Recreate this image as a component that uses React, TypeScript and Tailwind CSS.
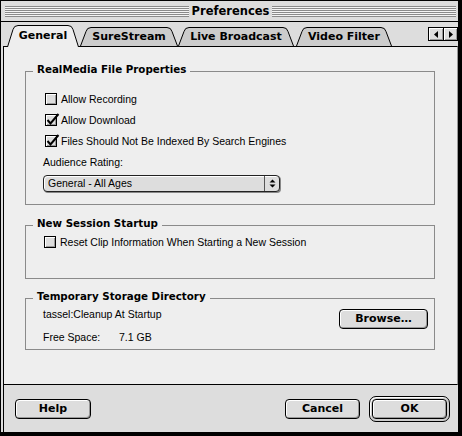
import React from "react";

const body = "font-['Liberation_Sans',Arial,sans-serif] text-[10.5px] leading-[12px] text-black";
const bold = "font-['DejaVu_Sans',Verdana,sans-serif] font-bold text-black";

const Stripes: React.FC = () => (
  <div className="h-[11px] flex-1 bg-[repeating-linear-gradient(to_bottom,#8a8a8a_0px,#8a8a8a_1px,#f4f4f4_1px,#f4f4f4_2px)]" />
);

type TabProps = { label: string; w: number; size: string; active?: boolean };

const Tab: React.FC<TabProps> = ({ label, w, size, active }) => {
  const h = active ? 22 : 19;
  const edge = `M0.5 ${h} L6 4.5 Q7 0.5 11 0.5 H${w - 11} Q${w - 7} 0.5 ${w - 6} 4.5 L${w - 0.5} ${h}`;
  return (
    <div
      className={`relative flex items-center justify-center ${size} ${
        active ? "h-[22px] -mb-px z-10" : "h-[19px]"
      }`}
    >
      <svg className="absolute inset-0" width={w} height={h} viewBox={`0 0 ${w} ${h}`}>
        <path d={edge + " Z"} fill={active ? "#eeeeee" : "#cccccc"} />
        <path d={edge} fill="none" stroke="#000" />
      </svg>
      <span className={`relative ${bold} text-[11px] leading-[14px] ${active ? "-mt-[1px]" : "mt-[1px]"}`}>
        {label}
      </span>
    </div>
  );
};

const Check: React.FC<{ checked?: boolean }> = ({ checked }) => (
  <span className="relative w-[12px] h-[12px] shrink-0 border border-black bg-[#dddddd] shadow-[inset_1px_1px_0_#ffffff,inset_-1px_-1px_0_#999999]">
    {checked && (
      <svg className="absolute left-[0px] top-[-3px] overflow-visible" width="14" height="14" viewBox="0 0 14 14">
        <path d="M1.5 8 L4.5 11.5 L12.5 2" fill="none" stroke="#000" strokeWidth="2" />
      </svg>
    )}
  </span>
);

const Row: React.FC<{ label: string; checked?: boolean }> = ({ label, checked }) => (
  <div className="flex items-center gap-[4px] h-[12px]">
    <Check checked={checked} />
    <span className={body}>{label}</span>
  </div>
);

const Group: React.FC<{ title: string; className: string; children: React.ReactNode }> = ({
  title,
  className,
  children,
}) => (
  <div className={`relative border border-[#8a8a8a] ${className}`}>
    <span className={`absolute left-[7px] top-[-10px] bg-[#eeeeee] px-[4px] ${bold} text-[10.3px] leading-[14px]`}>
      {title}
    </span>
    {children}
  </div>
);

const Btn: React.FC<{ label: string; className: string }> = ({ label, className }) => (
  <button
    className={`h-[20px] flex items-center justify-center rounded-[4px] border border-black bg-[#dddddd] shadow-[inset_1px_1px_0_#ffffff,inset_-1px_-1px_0_#999999] ${bold} text-[11px] leading-[14px] ${className}`}
  >
    {label}
  </button>
);

const App: React.FC = () => {
  return (
    <div className="w-[462px] h-[436px] bg-[#dddddd] border border-black border-r-4 border-b-4 flex flex-col overflow-hidden">
      {/* Title bar */}
      <div className="h-[21px] shrink-0 border-b border-black flex items-center pl-[4px] pr-[2px] gap-[3px]">
        <Stripes />
        <span className={`${bold} text-[11.5px] leading-[14px]`}>Preferences</span>
        <Stripes />
      </div>

      {/* Tabs */}
      <div className="h-[24px] shrink-0 flex items-end pl-[6px]">
        <Tab label="General" w={72} size="w-[72px]" active />
        <div className="ml-[1px]">
          <Tab label="SureStream" w={98} size="w-[98px]" />
        </div>
        <Tab label="Live Broadcast" w={116} size="w-[116px]" />
        <div className="ml-[2px]">
          <Tab label="Video Filter" w={96} size="w-[96px]" />
        </div>
        <div className="ml-auto self-start mt-[5px] flex h-[14px] border border-black">
          <div className="w-[14px] flex items-center justify-center bg-[#dddddd] shadow-[inset_1px_1px_0_#ffffff,inset_-1px_-1px_0_#999999]">
            <svg width="4" height="7" viewBox="0 0 4 7">
              <polygon points="4,0 4,7 0,3.5" fill="#000" />
            </svg>
          </div>
          <div className="w-[14px] border-l border-black flex items-center justify-center bg-[#dddddd] shadow-[inset_1px_1px_0_#ffffff,inset_-1px_-1px_0_#999999]">
            <svg width="4" height="7" viewBox="0 0 4 7">
              <polygon points="0,0 0,7 4,3.5" fill="#000" />
            </svg>
          </div>
        </div>
      </div>

      <div className="flex-1 flex flex-col ml-[2px] border-l border-black">
        {/* Panel */}
        <div className="h-[339px] shrink-0 bg-[#eeeeee] border-t border-b border-r border-black border-r-[#999999] pt-[24px] pl-[21px] pr-[22px] flex flex-col">
          <Group title="RealMedia File Properties" className="h-[134px] pt-[21px] pl-[17px]">
            <div className="flex flex-col gap-[9px] ml-[2px]">
              <Row label="Allow Recording" />
              <Row label="Allow Download" checked />
              <Row label="Files Should Not Be Indexed By Search Engines" checked />
            </div>
            <div className={`${body} mt-[9px]`}>Audience Rating:</div>
            <div className="mt-[7px] w-[237px] h-[17px] flex rounded-[4px] border border-[#222222] bg-[#dddddd] shadow-[1px_1px_0_#888888,inset_1px_1px_0_#ffffff]">
              <span className={`${body} flex-1 pl-[4px] leading-[15px]`}>General - All Ages</span>
              <span className="w-[15px] border-l border-[#555555] flex items-center justify-center">
                <svg width="7" height="9" viewBox="0 0 7 9">
                  <path d="M3.5 0.5 L6.5 3.5 H0.5 Z M0.5 5.5 H6.5 L3.5 8.5 Z" fill="#000" />
                </svg>
              </span>
            </div>
          </Group>

          <Group title="New Session Startup" className="mt-[20px] h-[54px] pt-[10px] pl-[18px]">
            <Row label="Reset Clip Information When Starting a New Session" />
          </Group>

          <Group title="Temporary Storage Directory" className="mt-[19px] h-[52px] pl-[17px] pr-[6px] flex items-start">
            <div className="flex-1 pt-[9px] flex flex-col gap-[11px]">
              <div className={body}>tassel:Cleanup At Startup</div>
              <div className={`${body} flex`}>
                <span className="w-[76px]">Free Space:</span>
                <span>7.1 GB</span>
              </div>
            </div>
            <Btn label="Browse…" className="mt-[10px] w-[89px]" />
          </Group>
        </div>

        {/* Buttons */}
        <div className="flex-1 flex items-center pl-[11px] pr-[8px]">
          <Btn label="Help" className="w-[76px]" />
          <Btn label="Cancel" className="ml-auto w-[75px]" />
          <div className="ml-[9px] p-[2px] rounded-[7px] border border-black bg-[#cccccc] shadow-[inset_1px_1px_0_#ffffff]">
            <Btn label="OK" className="w-[75px]" />
          </div>
        </div>
      </div>
    </div>
  );
};

export default App;
